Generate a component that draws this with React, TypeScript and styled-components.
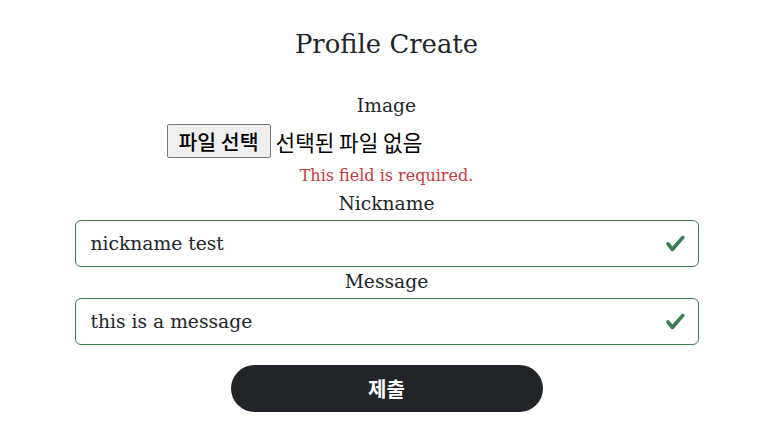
import styled, { createGlobalStyle } from 'styled-components';

const GlobalStyle = createGlobalStyle`
  body {
    margin: 0;
    background: #fff;
    color: #212529;
    font-family: "DejaVu Serif", "Noto Sans CJK KR", serif;
  }
`;

const serif = `"DejaVu Serif", "Noto Sans CJK KR", serif`;
const korean = `"Noto Sans CJK KR", sans-serif`;

const checkIcon = `url("data:image/svg+xml,%3csvg xmlns='http://www.w3.org/2000/svg' viewBox='0 0 8 8'%3e%3cpath fill='%233c7d52' d='M2.3 6.73.6 4.53c-.4-1.04.46-1.4 1.1-.8l1.1 1.4 3.4-3.8c.6-.63 1.6-.27 1.2.7l-4 4.6c-.43.5-.8.4-1.1.1z'/%3e%3c/svg%3e")`;

const Page = styled.div`
  display: flex;
  flex-direction: column;
  align-items: center;
  padding: 29px 4px 0 0;
`;

const Title = styled.h1`
  margin: 0;
  font-family: ${serif};
  font-weight: 400;
  font-size: 25.9px;
  line-height: 30px;
`;

const Form = styled.form`
  width: 624px;
  margin-top: 35px;
  display: flex;
  flex-direction: column;
  align-items: center;
`;

const Label = styled.label<{ $top?: number }>`
  font-family: ${serif};
  font-size: 18.7px;
  line-height: 24px;
  margin-top: ${p => p.$top ?? 0}px;
`;

const FileRow = styled.div`
  width: 440px;
  margin-top: 6px;
  display: flex;
  align-items: center;
  gap: 5px;
`;

const FileButton = styled.button`
  height: 34px;
  padding: 0 11px;
  border: 1px solid #767676;
  border-radius: 2px;
  background: #efefef;
  font-family: ${korean};
  font-weight: 500;
  font-size: 20.5px;
  line-height: 1;
  color: #000;
`;

const FileName = styled.span`
  font-family: ${korean};
  font-size: 21.3px;
  color: #000;
`;

const Feedback = styled.div`
  margin-top: 8px;
  font-family: ${serif};
  font-size: 16px;
  line-height: 20px;
  color: #c43a41;
`;

const Input = styled.input`
  box-sizing: border-box;
  width: 100%;
  height: 47px;
  margin-top: 4px;
  padding: 0 48px 0 15px;
  border: 1px solid #3c7d52;
  border-radius: 6px;
  font-family: ${serif};
  font-size: 18.7px;
  color: #212529;
  background: #fff ${checkIcon} no-repeat right 12px center / 21px 21px;
  outline: none;
`;

const Submit = styled.button`
  margin-top: 20px;
  width: 312px;
  height: 47px;
  border: none;
  border-radius: 24px;
  background: #212529;
  color: #fff;
  font-family: ${korean};
  font-weight: 700;
  font-size: 20px;
`;

export default function App() {
  return (
    <>
      <GlobalStyle />
      <Page>
        <Title>Profile Create</Title>
        <Form onSubmit={e => e.preventDefault()}>
          <Label>Image</Label>
          <FileRow>
            <FileButton type="button">파일 선택</FileButton>
            <FileName>선택된 파일 없음</FileName>
          </FileRow>
          <Feedback>This field is required.</Feedback>
          <Label $top={6}>Nickname</Label>
          <Input defaultValue="nickname test" />
          <Label $top={3}>Message</Label>
          <Input defaultValue="this is a message" />
          <Submit type="submit">제출</Submit>
        </Form>
      </Page>
    </>
  );
}
